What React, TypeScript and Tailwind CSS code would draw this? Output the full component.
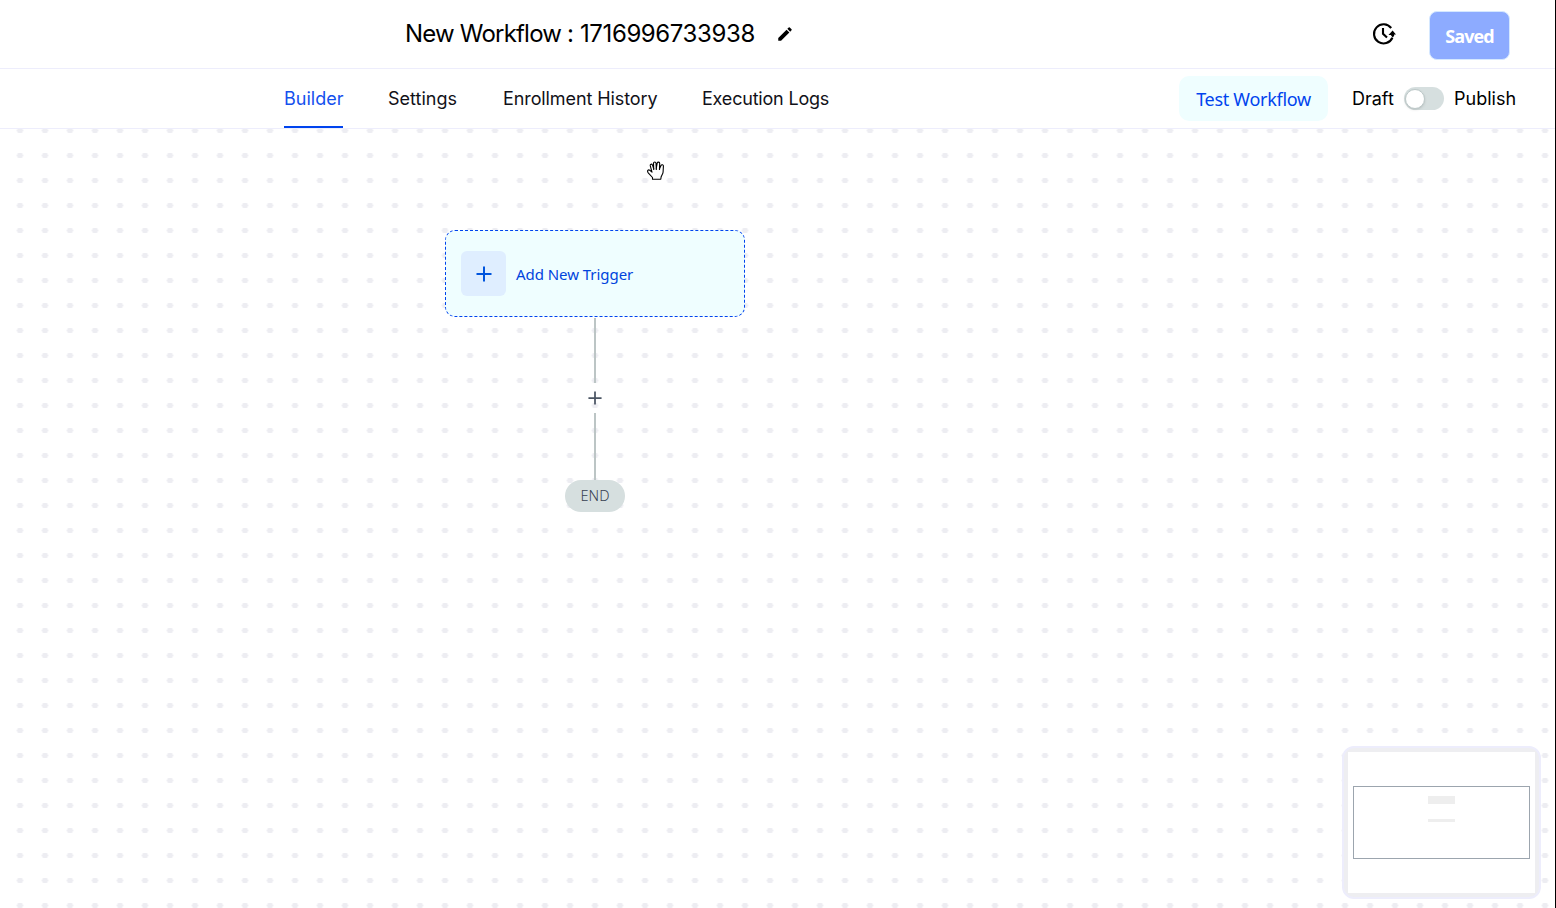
import { useState } from "react";
import { MdEdit } from "react-icons/md";

const tabs = [
  { name: "Builder", width: "w-[59px]" },
  { name: "Settings", width: "w-[70px]" },
  { name: "Enrollment History", width: "w-[154px] tracking-[-0.1px]" },
  { name: "Execution Logs", width: "w-[128px] tracking-[-0.2px]" },
];

function HistoryIcon() {
  return (
    <svg width="24" height="24" viewBox="0 0 24 24" fill="none" stroke="#000" strokeWidth="2.1">
      <path d="M19.2 6A9.6 9.6 0 1 0 20.4 15.8" />
      <path d="M11 6v5.8l4 3.8" />
      <path d="M16.5 13 20.6 8.4 24 12.4h-1.8v1.2l-1.4 2.2-2-2.8Z" fill="#000" stroke="none" />
    </svg>
  );
}

function PlusIcon({ size, color, thickness }: { size: number; color: string; thickness: number }) {
  return (
    <svg width={size} height={size} viewBox="0 0 16 16" stroke={color} strokeWidth={thickness}>
      <path d="M8 .5v15M.5 8h15" />
    </svg>
  );
}

function HandCursor() {
  return (
    <svg width="19" height="19" viewBox="0 0 19 19" fill="#fff" stroke="#000" strokeWidth="1.1" strokeLinejoin="round">
      <path d="M5.5 18.3v-1.8L1.2 11.8C-.2 9.7 1.2 8.3 2.8 9.3l2.2 1.8-1.7-6.2c-.4-1.9 1.6-2.4 2.2-.8L6.7 7.7 6.5 2.1c.2-1.5 2.3-1.5 2.5 0l.3 5 .9-5c.4-1.5 2.5-1.2 2.5.4l-.2 5.2L14 4.4c.7-1.3 2.6-.6 2.4.8l-.3 5.8c-.1 1.8-1.6 3.4-2 5l-.3 2.3Z" />
      <path d="M6.7 7.3v1.7M9.3 6.8v2.2M12.5 7.3v1.7" />
    </svg>
  );
}

function Header() {
  return (
    <header className="flex h-[69px] items-center border-b border-[#ededfc] pr-[45px]">
      <h1 className="ml-[405px] flex w-[371px] text-[24px] whitespace-nowrap">
        <span className="w-[175px] tracking-[-0.8px]">New Workflow :</span>
        <span className="tracking-[-0.4px]">1716996733938</span>
      </h1>
      <MdEdit size={18} />
      <div className="ml-auto flex items-center gap-[33px]">
        <HistoryIcon />
        <button className="mt-[3px] h-[49px] w-[81px] rounded-lg border border-[#d5e8ff] bg-[#8dabff] pt-[2px] font-['Open_Sans',sans-serif] text-[18px] font-bold tracking-[-0.9px] text-white">
          Saved
        </button>
      </div>
    </header>
  );
}

function TabBar() {
  const [active, setActive] = useState("Builder");
  const [published, setPublished] = useState(false);

  return (
    <nav className="flex h-[60px] items-center justify-between border-b border-[#ededfc] pr-[39px] pl-[284px]">
      <div className="flex h-full gap-[45px]">
        {tabs.map((tab) => (
          <button
            key={tab.name}
            onClick={() => setActive(tab.name)}
            className={`${tab.width} border-b-2 pt-[2px] text-left text-[18px] whitespace-nowrap ${
              active === tab.name ? "border-[#0044ee] text-[#1450ee]" : "border-transparent text-[#111118]"
            }`}
          >
            {tab.name}
          </button>
        ))}
      </div>
      <div className="flex items-center text-[18px]">
        <button className="mr-[24px] h-[45px] w-[149px] rounded-[10px] bg-[#effeff] pt-[2px] font-['Noto_Sans',sans-serif] tracking-[-0.3px] text-[#0044ee]">
          Test Workflow
        </button>
        <span className="w-[52px]">Draft</span>
        <button
          onClick={() => setPublished(!published)}
          className={`flex h-[23px] w-[40px] items-center rounded-full bg-[#d6dfdf] px-[1px] ${published ? "justify-end" : ""}`}
        >
          <span className="size-[20px] rounded-full border border-[#bcc8c8] bg-white shadow-sm" />
        </button>
        <span className="ml-[10px] w-[62px]">Publish</span>
      </div>
    </nav>
  );
}

function MiniMap() {
  return (
    <div className="absolute top-[617px] left-[1342px] h-[153px] w-[199px] rounded-[12px] border-2 border-[#ededfc] bg-[#eeeef1] p-[4px]">
      <div className="h-full bg-white px-[5px] pt-[34px]">
        <div className="flex h-[73px] w-[177px] flex-col items-center border border-[#9ca5ae] pt-[9px]">
          <div className="h-[8px] w-[27px] bg-[#eeeeee]" />
          <div className="mt-[15px] h-[3px] w-[27px] bg-[#eeeeee]" />
        </div>
      </div>
    </div>
  );
}

function Canvas() {
  return (
    <main className="relative flex-1 overflow-hidden bg-[radial-gradient(ellipse_3.3px_2.9px,#ededf2_90%,transparent_100%)] bg-[length:25px_25px] bg-[position:7.5px_-11px] font-['Noto_Sans',sans-serif]">
      <div className="absolute top-[32px] left-[647px]">
        <HandCursor />
      </div>
      <div className="absolute top-[101px] left-[445px] flex w-[300px] flex-col items-center">
        <button className="flex h-[87px] w-full items-center rounded-[10px] border border-dashed border-[#0044ee] bg-[#effeff] pl-[15px]">
          <span className="flex size-[45px] items-center justify-center rounded-[6px] bg-[#dfeeff]">
            <PlusIcon size={16} color="#0055dd" thickness={2} />
          </span>
          <span className="mt-[2px] ml-[10px] text-[15px] tracking-[-0.05px] text-[#0044dd]">Add New Trigger</span>
        </button>
        <span className="mt-[1px] h-[65px] w-[2px] bg-[#bcc5c5]" />
        <span className="flex h-[30px] items-center">
          <PlusIcon size={14} color="#4b5563" thickness={2} />
        </span>
        <span className="h-[67px] w-[2px] bg-[#bcc5c5]" />
        <span className="flex h-[32px] w-[60px] items-center justify-center rounded-full bg-[#d6dfdf] text-[14.5px] font-light text-[#374151]">
          END
        </span>
      </div>
      <MiniMap />
    </main>
  );
}

export default function App() {
  return (
    <div className="flex h-[908px] w-[1556px] flex-col overflow-hidden border-r border-black bg-white font-['Inter',sans-serif] text-black">
      <Header />
      <TabBar />
      <Canvas />
    </div>
  );
}
